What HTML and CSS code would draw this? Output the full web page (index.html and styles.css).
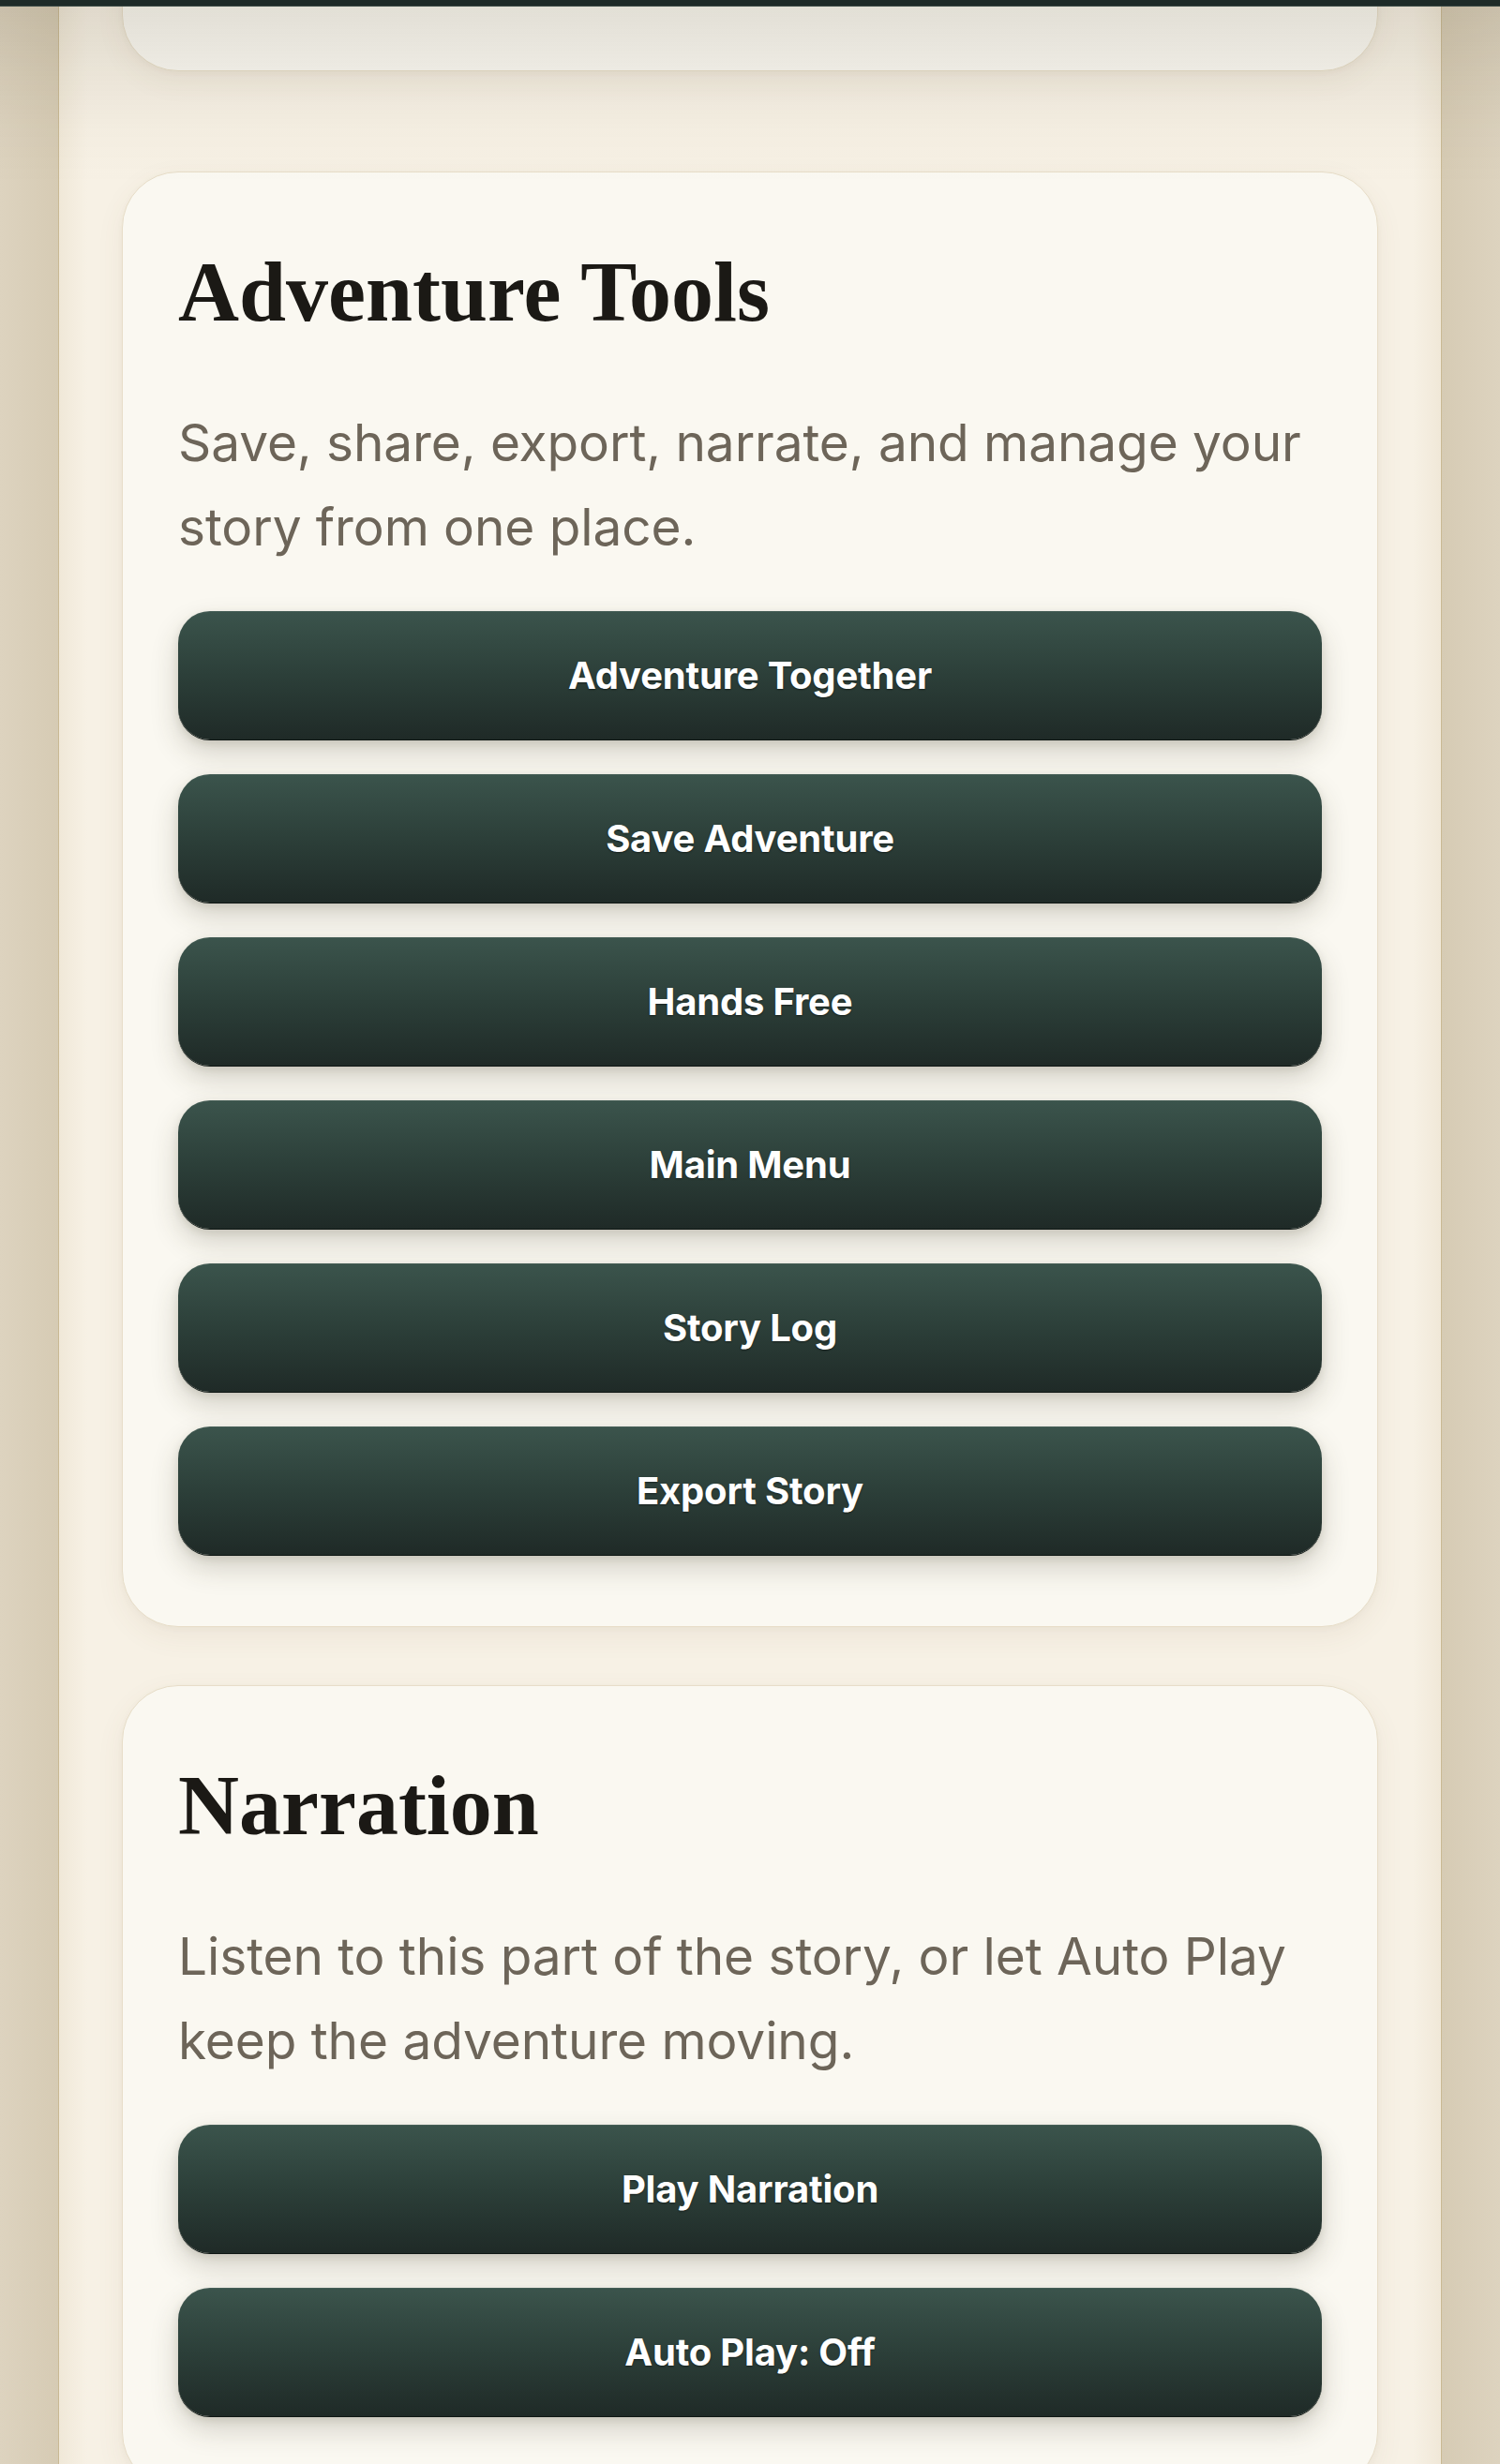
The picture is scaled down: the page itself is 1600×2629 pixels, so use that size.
FILE: index.html
```html
<!DOCTYPE html>
<html lang="en">
<head>
<meta charset="utf-8">
<title>Adventure Tools</title>
<link rel="stylesheet" href="styles.css">
</head>
<body>
<header class="topbar"></header>
<main class="page">
  <section class="card card-stub"></section>

  <section class="card">
    <h2 class="card-title">Adventure Tools</h2>
    <p class="card-text">Save, share, export, narrate, and manage your story from one place.</p>
    <div class="btn-stack">
      <button class="btn">Adventure Together</button>
      <button class="btn">Save Adventure</button>
      <button class="btn">Hands Free</button>
      <button class="btn">Main Menu</button>
      <button class="btn">Story Log</button>
      <button class="btn">Export Story</button>
    </div>
  </section>

  <section class="card card-last">
    <h2 class="card-title">Narration</h2>
    <p class="card-text">Listen to this part of the story, or let Auto Play keep the adventure moving.</p>
    <div class="btn-stack">
      <button class="btn">Play Narration</button>
      <button class="btn">Auto Play: Off</button>
    </div>
  </section>
</main>
</body>
</html>
```

FILE: styles.css
```css
* { box-sizing: border-box; }

html, body {
  margin: 0;
  padding: 0;
}

body {
  min-height: 2629px;
  background: linear-gradient(90deg, #ddd3bf 0px, #d6cbb4 62px, #d6cbb4 1538px, #ddd3bf 1600px);
  font-family: "Inter", "Liberation Sans", sans-serif;
  overflow: hidden;
}

.topbar {
  position: fixed;
  top: 0;
  left: 0;
  right: 0;
  height: 7px;
  background: #1e2b28;
  border-bottom: 1px solid #3a4944;
  z-index: 10;
}

.topbar::after {
  content: "";
  position: absolute;
  top: 7px;
  left: 0;
  right: 0;
  height: 190px;
  background: linear-gradient(180deg, rgba(70, 60, 35, 0.13) 0%, rgba(70, 60, 35, 0.07) 35%, rgba(70, 60, 35, 0.02) 70%, rgba(70, 60, 35, 0) 100%);
  pointer-events: none;
}

.page {
  width: 1476px;
  margin: 0 auto;
  min-height: 2629px;
  display: flex;
  flex-direction: column;
  background: linear-gradient(90deg, #f0e8d8 0px, #f7f1e5 30px, #f7f1e5 1444px, #f0e8d8 1474px);
  border-left: 1px solid #c9b994;
  border-right: 1px solid #c9b994;
}

.card {
  margin: 107px 67px 0;
  background: #faf8f1;
  border: 1px solid #e7ddc8;
  border-radius: 60px;
  padding: 78px 59px 76px;
  box-shadow: 0 10px 30px rgba(110, 90, 50, 0.07), 0 2px 6px rgba(110, 90, 50, 0.04);
}

.card-stub {
  margin-top: -60px;
  height: 136px;
  padding: 0;
  flex: none;
}

.card-last {
  margin-top: 62px;
}

.card-title {
  margin: 0;
  font-family: "Liberation Serif", "DejaVu Serif", serif;
  font-weight: 700;
  font-size: 90px;
  line-height: 99px;
  color: #1b1915;
}

.card-text {
  margin: 66px 0 0;
  font-size: 55px;
  line-height: 90px;
  color: #6d6559;
  font-weight: 400;
  letter-spacing: -0.1px;
}

.btn-stack {
  margin-top: 45px;
  display: flex;
  flex-direction: column;
  gap: 37px;
}

.btn {
  display: block;
  width: 100%;
  height: 137px;
  border: none;
  border-radius: 34px;
  background: linear-gradient(180deg, #3b544c 0%, #2c3f39 50%, #1f2a27 100%);
  color: #ffffff;
  font-family: "Inter", "Liberation Sans", sans-serif;
  font-weight: 700;
  font-size: 40px;
  letter-spacing: -0.2px;
  text-shadow: 0 1px 2px rgba(0, 0, 0, 0.45);
  box-shadow: 0 1px 0 #0f1714, inset 0 1px 0 rgba(255, 255, 255, 0.06), 0 14px 30px rgba(60, 55, 35, 0.2), 0 4px 10px rgba(60, 55, 35, 0.12);
  cursor: pointer;
}
```
